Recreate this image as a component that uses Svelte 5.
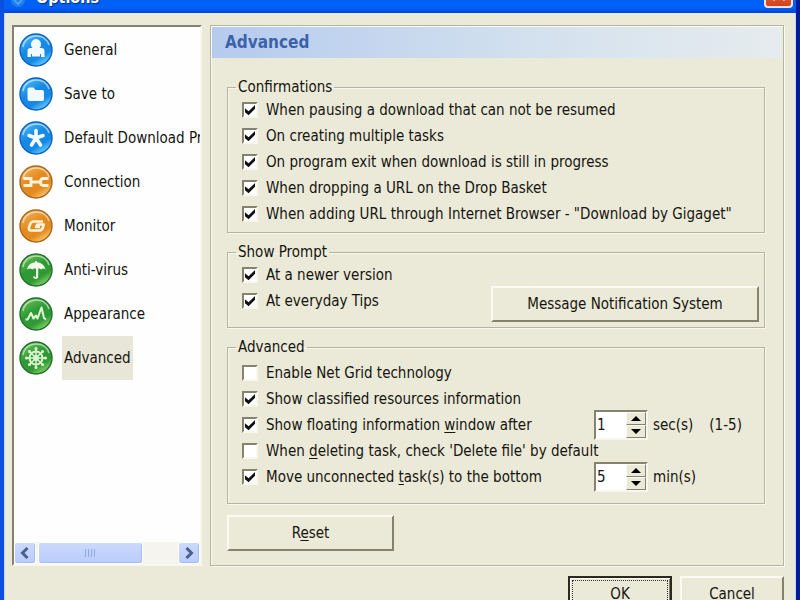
<script>
  let selected = $state('Advanced');

  const pages = [
    { name: 'General', color: 'blue', icon: 'person' },
    { name: 'Save to', color: 'blue', icon: 'folder' },
    { name: 'Default Download Pr', color: 'blue', icon: 'star' },
    { name: 'Connection', color: 'orange', icon: 'link' },
    { name: 'Monitor', color: 'orange', icon: 'monitor' },
    { name: 'Anti-virus', color: 'green', icon: 'umbrella' },
    { name: 'Appearance', color: 'green', icon: 'chart' },
    { name: 'Advanced', color: 'green', icon: 'wheel' },
  ];

  const colors = {
    blue: ['#0b62c4', '#1689e4', '#5cc8fb'],
    orange: ['#a8691c', '#e58a1f', '#f9bd62'],
    green: ['#23702a', '#2f9a35', '#7ccb62'],
  };

  let confirmations = $state([
    { text: 'When pausing a download that can not be resumed', on: true },
    { text: 'On creating multiple tasks', on: true },
    { text: 'On program exit when download is still in progress', on: true },
    { text: 'When dropping a URL on the Drop Basket', on: true },
    { text: 'When adding URL through Internet Browser - "Download by Gigaget"', on: true },
  ]);

  let prompts = $state([
    { text: 'At a newer version', on: true },
    { text: 'At everyday Tips', on: true },
  ]);

  // key = underlined access key, placed between text and rest
  let advanced = $state([
    { text: 'Enable Net Grid technology', on: false },
    { text: 'Show classified resources information', on: true },
    { text: 'Show floating information ', key: 'w', rest: 'indow after', on: true, value: 1, unit: 'sec(s)', hint: '(1-5)' },
    { text: 'When ', key: 'd', rest: "eleting task, check 'Delete file' by default", on: false },
    { text: 'Move unconnected ', key: 't', rest: 'ask(s) to the bottom', on: true, value: 5, unit: 'min(s)' },
  ]);

  function step(row, by) {
    row.value = Math.max(1, row.value + by);
  }
</script>

{#snippet check(row)}
  <label class="check">
    <input type="checkbox" bind:checked={row.on} />
    <span>{row.text}{#if row.key}<u>{row.key}</u>{row.rest}{/if}</span>
  </label>
{/snippet}

<div class="window">
  <header class="titlebar">
    <svg width="16" height="16" viewBox="0 0 16 16" aria-hidden="true">
      <circle cx="8" cy="8" r="7" fill="#1c7fe8" />
      <path d="M4 8l4 4 4-4" fill="none" stroke="#4f9ff5" stroke-width="2" />
    </svg>
    <h1>Options</h1>
    <button class="close" aria-label="Close">
      <svg width="16" height="16" viewBox="0 0 16 16"><path d="M2 2l12 12M14 2L2 14" stroke="#fff" stroke-width="3" /></svg>
    </button>
  </header>

  <main>
    <div class="columns">
      <nav class="list">
        <div class="items">
          {#each pages as page}
            <button class="item" class:selected={selected === page.name} onclick={() => (selected = page.name)}>
              <svg width="34" height="34" viewBox="0 0 34 34" aria-hidden="true">
                <defs>
                  <linearGradient id="g-{page.icon}" x1="0" y1="0" x2="0.6" y2="1">
                    <stop offset="0" stop-color={colors[page.color][2]} />
                    <stop offset="0.5" stop-color={colors[page.color][1]} />
                    <stop offset="0.8" stop-color={colors[page.color][1]} />
                    <stop offset="1" stop-color={colors[page.color][2]} />
                  </linearGradient>
                </defs>
                <circle cx="17" cy="17" r="16" fill="url(#g-{page.icon})" stroke={colors[page.color][0]} stroke-width="1.4" />
                <path d="M4 14C5 7 11 3 17 3s11 3 13 9" fill="none" stroke="#fff" stroke-opacity="0.55" stroke-width="1.6" />
                {#if page.icon === 'person'}
                  <path d="M17 6a5 5 0 0 1 5 5.500c0 1.500-.6 2.500-1.500 3.500h2q3 0 3 3v6h-3.500v-3h-1v2.500h-8V21h-1v3H8.500v-6q0-3 3-3h2c-.9-1-1.500-2-1.500-3.500A5 5 0 0 1 17 6z" fill="#f2faff" />
                {:else if page.icon === 'folder'}
                  <path d="M8.500 12.500q0-2 2-2h4l2 2.500h6.500q2 0 2 2v7q0 2-2 2H10.500q-2 0-2-2z" fill="#f2faff" />
                {:else if page.icon === 'star'}
                  <path d="M17 17V9.500M17 17l-7-2.500M17 17l7-2.500M17 17l-4.500 7M17 17l4.500 7" stroke="#f2faff" stroke-width="3.600" stroke-linecap="round" />
                {:else if page.icon === 'link'}
                  <path d="M4.500 13.500H12v7H4.500M12 17h10M29.500 13.500h-5q-3 0-3 3.500t3 3.500h5" fill="none" stroke="#fff3dc" stroke-width="2.800" />
                {:else if page.icon === 'monitor'}
                  <path d="M24 12.500h-9q-3 0-4 3l-1 3q-.8 3 2 3h8q3 0 4-3l.8-3h-6.300l-1.500 2.500h4" fill="none" stroke="#fff3dc" stroke-width="2.600" stroke-linejoin="round" />
                {:else if page.icon === 'umbrella'}
                  <path d="M8 16.500C9 11.500 13 9.500 16.300 9.300V8h1.600v1.300C22 9.500 25.500 12 26.500 16.500c-1.500-1.300-3-1.300-4.300 0-1-1.100-2-1.300-3-.8V24c0 2.500-5 2.800-5.200-.5h2c.2 1 1 .9 1 .2v-8c-1.500-.6-2.600-.3-3.500.8-1.500-1.400-3.500-1.400-5.500 0z" fill="#f0fbe9" />
                {:else if page.icon === 'chart'}
                  <path d="M6.500 22.500h2l3.500-6.500 2.500 5.500 2.500-3 1.500 3 4-11 2.500 10.500 2 1.500" fill="none" stroke="#e2f6d6" stroke-width="2" stroke-linejoin="round" />
                {:else}
                  <g fill="none" stroke="#dcf3cf">
                    <path d="M17 7.500v19M7.500 17h19M10.500 10.500l13 13M23.500 10.500l-13 13" stroke-width="1.500" />
                    <circle cx="17" cy="17" r="6.500" stroke-width="2" />
                    <circle cx="17" cy="17" r="2.200" stroke-width="1.500" />
                    <path d="M17 7.500v.1M17 26.400v.1M7.500 17h.1M26.400 17h.1M10.500 10.500h.1M23.500 23.500h.1M23.500 10.500h.1M10.500 23.500h.1" stroke-width="3.200" stroke-linecap="round" />
                  </g>
                {/if}
              </svg>
              <span class="name">{page.name}</span>
            </button>
          {/each}
        </div>
        <div class="scrollbar">
          <button aria-label="Scroll left">
            <svg width="12" height="12" viewBox="0 0 12 12"><path d="M8.500 1L3.500 6l5 5" fill="none" stroke="#4a618c" stroke-width="3" /></svg>
          </button>
          <div class="track"><div class="thumb"><i></i><i></i><i></i><i></i></div></div>
          <button aria-label="Scroll right">
            <svg width="12" height="12" viewBox="0 0 12 12"><path d="M3.500 1l5 5-5 5" fill="none" stroke="#4a618c" stroke-width="3" /></svg>
          </button>
        </div>
      </nav>

      <section class="panel">
        <h2>Advanced</h2>
        <div class="groups">
          <fieldset>
            <legend>Confirmations</legend>
            {#each confirmations as row}
              {@render check(row)}
            {/each}
          </fieldset>

          <fieldset>
            <legend>Show Prompt</legend>
            <div class="prompt">
              <div>
                {#each prompts as row}
                  {@render check(row)}
                {/each}
              </div>
              <button class="btn message">Message Notification System</button>
            </div>
          </fieldset>

          <fieldset class="roomy">
            <legend>Advanced</legend>
            {#each advanced as row}
              <div class="row">
                {@render check(row)}
                {#if row.unit}
                  <div class="amount">
                    <div class="spin">
                      <input type="number" aria-label={row.text + row.key + row.rest} bind:value={row.value} />
                      <div class="arrows">
                        <button aria-label="Increase" onclick={() => step(row, 1)}>
                          <svg width="10" height="5" viewBox="0 0 10 5"><path d="M5 0l5 5H0z" /></svg>
                        </button>
                        <button aria-label="Decrease" onclick={() => step(row, -1)}>
                          <svg width="10" height="5" viewBox="0 0 10 5"><path d="M5 5l5-5H0z" /></svg>
                        </button>
                      </div>
                    </div>
                    <span>{row.unit}</span>
                    {#if row.hint}<span class="hint">{row.hint}</span>{/if}
                  </div>
                {/if}
              </div>
            {/each}
          </fieldset>

          <button class="btn reset">R<u>e</u>set</button>
        </div>
      </section>
    </div>

    <footer>
      <button class="btn ok"><span>OK</span></button>
      <button class="btn">Cancel</button>
    </footer>
  </main>
</div>

<style>
  :global(body) {
    margin: 0;
    overflow: hidden;
  }
  .window {
    display: flex;
    flex-direction: column;
    height: 100vh;
    overflow: hidden;
    box-sizing: border-box;
    border-left: 4px solid #0a4fe0;
    border-right: 4px solid #001c9c;
    background: #ebe9d8;
    color: #15150f;
    font-family: Tahoma, "DejaVu Sans Condensed", "DejaVu Sans", sans-serif;
    font-stretch: condensed;
    font-size: 15px;
    line-height: 20px;
  }
  button, input {
    font: inherit;
    color: inherit;
    padding: 0;
    margin: 0;
    border: 0;
    border-radius: 0;
  }
  u {
    text-underline-offset: 2px;
  }

  /* Title bar, scrolled up against the top edge */
  .titlebar {
    display: flex;
    align-items: flex-end;
    flex: none;
    gap: 10px;
    height: 8px;
    padding: 0 3px 5px 6px;
    background: linear-gradient(#0060f8 60%, #0046d8);
  }
  h1 {
    flex: 1;
    margin: 0;
    color: #fff;
    font-size: 16px;
    line-height: 20px;
    text-shadow: 1px 1px 1px #0a2a80;
  }
  .close {
    display: flex;
    align-items: center;
    justify-content: center;
    width: 29px;
    height: 29px;
    box-sizing: border-box;
    border: 2px solid #f3e4e4;
    border-radius: 4px;
    background: linear-gradient(#e88a6c, #d3401a);
  }

  main {
    flex: none;
    padding: 12px 11px 0 7px;
    border-left: 1px solid #c4d6f4;
    border-right: 1px solid #c4d6f4;
  }
  .columns {
    display: flex;
    gap: 8px;
  }

  /* Page list */
  .list {
    display: flex;
    flex-direction: column;
    flex: 0 0 190px;
    box-sizing: border-box;
    border: 2px solid;
    border-color: #85836f #f8f7ee #f8f7ee #85836f;
    background: #fefefe;
    overflow: hidden;
  }
  .items {
    flex: 1;
    padding-top: 1px;
    overflow: hidden;
  }
  .item {
    display: flex;
    align-items: center;
    gap: 9px;
    width: 100%;
    height: 44px;
    padding-left: 5px;
    background: none;
    text-align: left;
  }
  .item svg {
    flex: none;
  }
  .name {
    flex: none;
    padding: 0 2px;
    line-height: 44px;
    white-space: nowrap;
  }
  .selected .name {
    background: #e8e6d6;
  }
  .scrollbar {
    display: flex;
    height: 22px;
    background: #f5f4ef;
  }
  .scrollbar button, .thumb {
    display: flex;
    align-items: center;
    justify-content: center;
    box-sizing: border-box;
    border: 1px solid #fff;
    border-radius: 3px;
    background: linear-gradient(#cbd9fc, #b9cdfb);
    box-shadow: inset -1px -1px #a5bcf0;
  }
  .scrollbar button {
    width: 22px;
  }
  .track {
    flex: 1;
    padding: 0 2px;
  }
  .thumb {
    gap: 2px;
    width: 76%;
    height: 22px;
  }
  .thumb i {
    width: 1px;
    height: 8px;
    background: #8fa8dd;
  }

  /* Settings panel */
  .panel {
    flex: 1;
    min-width: 0;
    border: 1px solid #b5b3a1;
    box-shadow: inset 1px 1px #fbfaf2, 1px 1px #fbfaf2;
    padding: 1px;
  }
  h2 {
    margin: 0;
    padding: 0 13px;
    background: linear-gradient(90deg, #b5cbee, #d5e2ee 60%, #e6ecee);
    color: #3c62ac;
    font-size: 17px;
    line-height: 31px;
  }
  .groups {
    display: flex;
    flex-direction: column;
    gap: 9px;
    padding: 19px 17px 13px 15px;
  }
  fieldset {
    min-width: 0;
    margin: 0;
    padding: 0 5px 5px 14px;
    border: 1px solid #b5b3a1;
    box-shadow: inset 1px 1px #f8f7ec, 1px 1px #f8f7ec;
  }
  fieldset.roomy {
    padding: 3px 0 13px 14px;
  }
  legend {
    margin-left: -6px;
    padding: 0 2px;
  }
  .check {
    display: flex;
    align-items: center;
    gap: 8px;
    height: 26px;
    white-space: nowrap;
  }
  .check input {
    appearance: none;
    flex: none;
    width: 16px;
    height: 16px;
    border: 2px solid;
    border-color: #85836f #f8f7ee #f8f7ee #85836f;
    background: #fff;
  }
  .check input:checked::after {
    content: "";
    display: block;
    width: 12px;
    height: 12px;
    background: #111;
    clip-path: polygon(8% 35%, 38% 60%, 92% 8%, 92% 40%, 38% 94%, 8% 68%);
  }
  .prompt {
    display: flex;
    align-items: flex-end;
    justify-content: space-between;
    height: 60px;
  }
  .prompt > div {
    align-self: flex-start;
  }

  .btn {
    height: 36px;
    box-sizing: border-box;
    border: 2px solid;
    border-color: #fbfaf2 #85836f #85836f #fbfaf2;
    background: #ebe9d8;
  }
  .message {
    width: 268px;
  }
  .reset {
    align-self: flex-start;
    width: 167px;
    margin-top: 2px;
  }

  .row {
    display: grid;
    grid-template-columns: 1fr 170px;
    grid-auto-rows: 26px;
    align-items: center;
  }
  .amount {
    display: flex;
    align-items: center;
    gap: 5px;
  }
  .hint {
    margin-left: 11px;
  }
  .spin {
    display: flex;
    width: 50px;
    height: 26px;
    border: 2px solid;
    border-color: #85836f #f8f7ee #f8f7ee #85836f;
    background: #fff;
  }
  .spin input {
    appearance: textfield;
    flex: 1;
    min-width: 0;
    padding-left: 1px;
    background: none;
  }
  .spin input::-webkit-inner-spin-button {
    display: none;
  }
  .arrows {
    display: flex;
    flex-direction: column;
    width: 20px;
  }
  .arrows button {
    display: flex;
    flex: 1;
    align-items: center;
    justify-content: center;
    border: 1px solid;
    border-color: #fbfaf2 #85836f #85836f #fbfaf2;
    background: #ebe9d8;
  }

  footer {
    display: flex;
    justify-content: flex-end;
    gap: 8px;
    padding-top: 10px;
  }
  footer .btn {
    width: 104px;
  }
  .ok {
    padding: 2px;
    border-color: #2a2a22;
    box-shadow: inset 1px 1px #fbfaf2, inset -1px -1px #85836f;
  }
  .ok span {
    display: block;
    border: 1px dotted #333;
    line-height: 26px;
  }
</style>
